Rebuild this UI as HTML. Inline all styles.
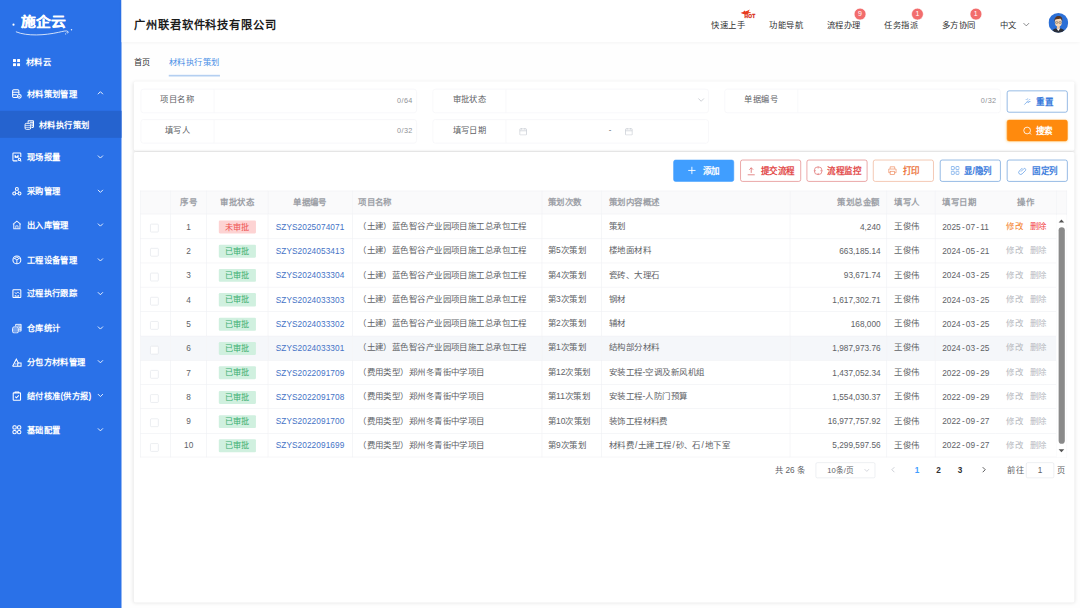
<!DOCTYPE html>
<html lang="zh-CN">
<head>
<meta charset="utf-8">
<title>材料执行策划</title>
<style>
*{box-sizing:border-box;margin:0;padding:0}
html,body{width:1080px;height:608px;overflow:hidden;background:#fefefe}
body{font-family:"Liberation Sans",sans-serif;color:#606266}
#app{position:absolute;left:0;top:0;width:1920px;height:1081px;transform:scale(.5625);transform-origin:0 0;font-size:15px;overflow:hidden;background:#fefefe}
.abs{position:absolute}
/* sidebar */
#side{position:absolute;left:0;top:0;width:215.6px;height:1081px;background:#2a71e8}
#side .it{position:absolute;left:0;width:216px;height:40px;line-height:40px;color:#fff;font-weight:bold;font-size:14.7px;white-space:nowrap}
#side .it span{position:absolute;left:47.5px;top:0}
#side .it svg.ic{position:absolute;left:21px;top:11px;width:18px;height:18px}
#side .it svg.ar{position:absolute;left:172px;top:12.5px;width:13px;height:13px}
#side .act{position:absolute;left:0;top:197.3px;width:215.6px;height:47.5px;background:#2563cf}
/* header */
#hdr{position:absolute;left:215.6px;top:0;width:1704px;height:75px;background:#fff;box-shadow:0 2px 6px rgba(0,0,0,.08)}
#title{position:absolute;left:238px;top:29px;font-size:20px;line-height:30px;font-weight:bold;color:#1a1a1a;letter-spacing:1.2px;white-space:nowrap}
.nav{position:absolute;top:30.5px;font-size:14.8px;line-height:26px;color:#303133;white-space:nowrap}
.bdg{position:absolute;top:14px;width:21.5px;height:21.5px;border-radius:11px;background:#f26d6d;color:#fff;font-size:12.5px;line-height:19.5px;text-align:center;border:1px solid #fff}
/* tabs */
.tab{position:absolute;top:98px;font-size:14.4px;line-height:26px;white-space:nowrap}
/* cards */
.card{position:absolute;left:238px;width:1671.5px;background:#fff;border-radius:3px;box-shadow:0 1px 7px rgba(0,0,0,.10)}
.fld{position:absolute;height:42.5px;border:1px solid #f2f3f6;border-radius:5px;background:#fff;width:491px}
.fld .lb{position:absolute;left:0;top:0;width:130px;height:40.5px;line-height:36.5px;text-align:center;border-right:1px solid #f2f3f6;color:#606266;font-size:14.7px}
.fld .cnt{position:absolute;right:6px;top:0;line-height:39.6px;font-size:12.9px;color:#8f9297;letter-spacing:.7px}
.btn{position:absolute;width:108px;height:39px;border-radius:4px;border:1.8px solid;font-size:15.2px;font-weight:bold;line-height:40px;white-space:nowrap;background:#fff}
.btn span{position:absolute;top:0}
.btn svg{position:absolute}
/* table */
table{position:absolute;left:248.9px;top:338.6px;border-collapse:collapse;table-layout:fixed;width:1646.7px;font-size:15px;color:#606266}
th,td{border:1px solid #eeeff3;height:43.28px;padding:0 10px;white-space:nowrap;overflow:hidden;text-align:left;font-weight:normal}
th{height:41.7px;background:#fafafb;color:#9c9fa6;font-weight:bold;padding-bottom:5px}
td.c,th.c{text-align:center;padding:0}
th.c{padding-bottom:5px}
td{padding-bottom:3.5px}
td.c{padding-bottom:3.5px}
td.lat{padding-bottom:0;padding-top:1.2px;font-size:14.7px}
tr:last-child td{height:41.9px;padding-bottom:2.1px}
tr:last-child td.lat{padding-bottom:0;padding-top:2.6px}
td.r,th.r{text-align:right}
tr.hov td{background:#f5f7fa}
.cb{display:inline-block;width:15px;height:15px;border:1px solid #dfe2e8;border-radius:2px;background:#fff;vertical-align:middle;position:relative;left:-1.6px;top:3.8px}
.tag{position:relative;top:2.6px;display:inline-block;width:65.8px;height:23.2px;line-height:23.2px;border-radius:2px;font-size:14.4px;text-align:center;vertical-align:middle}
.tag.r{background:#fdd3d3;color:#ee4f4f}
.tag.g{background:#d0f0df;color:#36ad6e}
.lk{color:#4573c6}
.num{letter-spacing:0}
.dt i{font-style:normal;margin:0 2.2px}
.sl{font-style:normal;margin:0 1.3px}
.lk{letter-spacing:.13px}
.ops span{margin:0 5.85px}
td.ops{padding-left:2.6px}
.op-e{color:#f5822b}.op-d{color:#f24444}.op-x{color:#b7babf}
td.gut{padding:0;background:#fff;border-left:none}
th.gut{padding:0}
tr>*:nth-child(7){padding-left:12.5px}
tr>*:nth-child(9){padding-left:13px}
tr>*:nth-child(10){padding-left:12px;border-right:none}
tr>*:nth-child(11){border-left:none}
th.r{padding-right:12px}
.pg{position:absolute;top:821px;font-size:14.6px;line-height:28px;color:#606266;white-space:nowrap}
</style>
</head>
<body>
<div id="app">

<!-- ============ SIDEBAR ============ -->
<div id="side">
  <!-- logo -->
  <svg class="abs" style="left:18px;top:18px;width:120px;height:48px" viewBox="0 0 120 48">
    <path d="M10.900 38.700 C30 46.800 62 44.800 86 39.500 C94 37.800 100.500 35.500 103 38.200 C104.200 40 102.500 41.300 101 40.300" fill="none" stroke="#fff" stroke-width="1.500" stroke-linecap="round" opacity=".92"/>
    <circle cx="6" cy="25.800" r="1.900" fill="#fff"/>
    <circle cx="109.100" cy="34.900" r="1.300" fill="#fff" opacity=".9"/>
    <circle cx="98.700" cy="42.300" r="1" fill="#fff" opacity=".8"/>
  </svg>
  <div class="abs" style="left:36.500px;top:22.800px;font-size:22.500px;line-height:32px;font-weight:bold;color:#fff;letter-spacing:0;-webkit-text-stroke:.5px #fff;white-space:nowrap;transform:scaleX(1.167);transform-origin:0 0">施企云</div>

  <div class="it" style="top:91px"><svg class="ic" style="left:23px;top:14px;width:13px;height:13px" viewBox="0 0 13 13"><rect x="0" y="0" width="5.4" height="5.4" rx="1" fill="#fff"/><rect x="7.4" y="0" width="5.4" height="5.4" rx="1" fill="#fff"/><rect x="0" y="7.4" width="5.4" height="5.4" rx="1" fill="#fff"/><rect x="7.4" y="7.4" width="5.4" height="5.4" rx="1" fill="#fff"/></svg><span style="left:46px">材料云</span></div>

  <div class="it" style="top:146.7px"><svg class="ic" style="top:11.500px" viewBox="0 0 18 18" fill="none" stroke="#fff" stroke-width="1.800" stroke-linecap="round" stroke-linejoin="round"><path d="M9 15.500H3.500a2 2 0 0 1-2-2v-10a2 2 0 0 1 2-2h7a2 2 0 0 1 2 2v5"/><path d="M1.500 6h11M1.500 10.500h7"/><circle cx="13.300" cy="13.300" r="3.400" stroke-width="1.900"/><path d="M11.900 13.300l1 1 1.700-1.800" stroke-width="1.500"/></svg><span>材料策划管理</span><svg class="ar" viewBox="0 0 13 13" fill="none" stroke="#fff" stroke-width="1.700" opacity=".95"><path d="M2 8.500l4.500-4.500 4.500 4.500"/></svg></div>

  <div class="act"></div>
  <div class="it" style="top:202.3px"><svg class="ic" style="left:42.500px" viewBox="0 0 18 18" fill="none" stroke="#fff" stroke-width="1.800" stroke-linejoin="round"><path d="M7 5V2.500a1 1 0 0 1 1-1h7.500a1 1 0 0 1 1 1v10a1 1 0 0 1-1 1H13"/><path d="M10 4.500h6M12.500 7.500h4M13 10.500h3.500" stroke-width="1.850"/><rect x="1.400" y="6.300" width="10.200" height="10.600" rx="2.400" stroke-width="1.700"/><path d="M1.500 9.900h10M1.500 13.400h10" stroke-width="1.250"/></svg><span style="left:69.300px">材料执行策划</span></div>

  <div class="it" style="top:259.100px"><svg class="ic" viewBox="0 0 18 18" fill="none" stroke="#fff" stroke-width="1.850"><path d="M16 9V3a1 1 0 0 0-1-1H3a1 1 0 0 0-1 1v12a1 1 0 0 0 1 1h7"/><path d="M5.500 6l3 2.500 3-2.500v4h-6z" fill="#fff" stroke-width="1.200"/><circle cx="13.500" cy="13.500" r="2"/><path d="M15 15l1.800 1.800"/></svg><span>现场报量</span><svg class="ar" viewBox="0 0 13 13" fill="none" stroke="#fff" stroke-width="1.700" opacity=".92"><path d="M2 4.500l4.500 4.500 4.500-4.500"/></svg></div>

  <div class="it" style="top:320.400px"><svg class="ic" viewBox="0 0 18 18" fill="none" stroke="#fff" stroke-width="1.850"><circle cx="9" cy="4.800" r="2.600"/><circle cx="4.300" cy="13" r="2.600"/><circle cx="13.700" cy="13" r="2.600"/><path d="M7.500 7.500L5.500 10.500M10.500 7.500l2 3M7 13h4" stroke-width="1.300"/></svg><span>采购管理</span><svg class="ar" viewBox="0 0 13 13" fill="none" stroke="#fff" stroke-width="1.700" opacity=".92"><path d="M2 4.500l4.500 4.500 4.500-4.500"/></svg></div>

  <div class="it" style="top:380.400px"><svg class="ic" viewBox="0 0 18 18" fill="none" stroke="#fff" stroke-width="1.850" opacity=".9"><path d="M2 8l7-6 7 6"/><path d="M3.500 7v8.500h11V7"/><path d="M7 15.500v-5h4v5" stroke-width="1.500"/></svg><span>出入库管理</span><svg class="ar" viewBox="0 0 13 13" fill="none" stroke="#fff" stroke-width="1.700" opacity=".92"><path d="M2 4.500l4.500 4.500 4.500-4.500"/></svg></div>

  <div class="it" style="top:442.200px"><svg class="ic" viewBox="0 0 18 18" fill="none" stroke="#fff" stroke-width="1.900"><circle cx="9" cy="9" r="7"/><path d="M9 9V16M9 9L3.500 5.500M9 9l5.500-3.500" stroke-width="1.600"/><path d="M5 6.500L9 4l4 2.500" stroke-width="1.500"/></svg><span>工程设备管理</span><svg class="ar" viewBox="0 0 13 13" fill="none" stroke="#fff" stroke-width="1.700" opacity=".92"><path d="M2 4.500l4.500 4.500 4.500-4.500"/></svg></div>

  <div class="it" style="top:502.200px"><svg class="ic" viewBox="0 0 18 18" fill="none" stroke="#fff" stroke-width="1.850"><rect x="2" y="2" width="14" height="14" rx="1"/><path d="M5 7l3 2 2.500-3 3 3" stroke-width="1.500"/><path d="M5 12.500h3M10 12.500h3" stroke-width="1.500"/><path d="M5 14.500h8" stroke-width="1.300"/></svg><span>过程执行跟踪</span><svg class="ar" viewBox="0 0 13 13" fill="none" stroke="#fff" stroke-width="1.700" opacity=".92"><path d="M2 4.500l4.500 4.500 4.500-4.500"/></svg></div>

  <div class="it" style="top:563.600px"><svg class="ic" viewBox="0 0 18 18" fill="none" stroke="#fff" stroke-width="1.800" stroke-linejoin="round"><path d="M7 5V2.500a1 1 0 0 1 1-1h7.500a1 1 0 0 1 1 1v10a1 1 0 0 1-1 1H13"/><path d="M10 4.500h6M12.500 7.500h4M13 10.500h3.500" stroke-width="1.850"/><rect x="1.400" y="6.300" width="10.200" height="10.600" rx="2.400" stroke-width="1.700"/><path d="M1.500 9.900h10M1.500 13.400h10" stroke-width="1.250"/></svg><span>仓库统计</span><svg class="ar" viewBox="0 0 13 13" fill="none" stroke="#fff" stroke-width="1.700" opacity=".92"><path d="M2 4.500l4.500 4.500 4.500-4.500"/></svg></div>

  <div class="it" style="top:623.600px"><svg class="ic" viewBox="0 0 18 18" fill="none" stroke="#fff" stroke-width="1.850"><path d="M1.500 16L8 3.500 12 11"/><path d="M1.500 16h15v-5.500h-6V16" /><path d="M5.500 12h3" stroke-width="1.500"/></svg><span>分包方材料管理</span><svg class="ar" viewBox="0 0 13 13" fill="none" stroke="#fff" stroke-width="1.700" opacity=".92"><path d="M2 4.500l4.500 4.500 4.500-4.500"/></svg></div>

  <div class="it" style="top:683.600px"><svg class="ic" viewBox="0 0 18 18" fill="none" stroke="#fff" stroke-width="1.900"><rect x="2.500" y="3.500" width="13" height="13" rx="1"/><path d="M6 3.500V2h6v1.500" /><path d="M6 10l2.300 2.300L12.500 8"/></svg><span>结付核准(供方报)</span><svg class="ar" viewBox="0 0 13 13" fill="none" stroke="#fff" stroke-width="1.700" opacity=".92"><path d="M2 4.500l4.500 4.500 4.500-4.500"/></svg></div>

  <div class="it" style="top:744px"><svg class="ic" viewBox="0 0 18 18" fill="none" stroke="#fff" stroke-width="1.850"><rect x="2" y="2" width="5.800" height="5.800" rx="2"/><rect x="10.200" y="2" width="5.800" height="5.800" rx="2"/><rect x="2" y="10.200" width="5.800" height="5.800" rx="2"/><rect x="10.200" y="10.200" width="5.800" height="5.800" rx="2"/></svg><span>基础配置</span><svg class="ar" viewBox="0 0 13 13" fill="none" stroke="#fff" stroke-width="1.700" opacity=".92"><path d="M2 4.500l4.500 4.500 4.500-4.500"/></svg></div>
</div>

<!-- ============ HEADER ============ -->
<div id="hdr"></div>
<div id="title">广州联君软件科技有限公司</div>

<div class="nav" style="left:1264.400px">快速上手</div>
<svg class="abs" style="left:1316px;top:16px;width:30px;height:17px" viewBox="0 0 30 17"><path d="M.5 6.500c3-.5 5.500-2 8-4.500-.2 1.200-.3 2 .2 2.600 2.500-.6 5.500-2 8.300-3.800-1.200 1.800-2 3.300-2.200 4.800 1.800-.2 3.300-.3 4.700 0-2.500.8-5 2-7 3.800-3.500.6-8-.4-12-2.900z" fill="#e93b1d"/><text x="7.500" y="15.600" font-family="Liberation Sans, sans-serif" font-size="8.600" font-weight="bold" fill="#d9301a" stroke="#d9301a" stroke-width=".55" letter-spacing=".4">HOT</text></svg>
<div class="nav" style="left:1367.600px">功能导航</div>
<div class="nav" style="left:1469.800px">流程办理</div>
<div class="bdg" style="left:1518.2px">9</div>
<div class="nav" style="left:1572.400px">任务指派</div>
<div class="bdg" style="left:1620.2px">1</div>
<div class="nav" style="left:1674px">多方协同</div>
<div class="bdg" style="left:1724.0px">1</div>
<div class="nav" style="left:1777.800px">中文</div>
<svg class="abs" style="left:1818px;top:37px;width:13px;height:13px" viewBox="0 0 13 13" fill="none" stroke="#606266" stroke-width="1.300"><path d="M1.500 4l5 5 5-5"/></svg>
<!-- avatar -->
<svg class="abs" style="left:1864.4px;top:22.5px;width:35px;height:35px" viewBox="0 0 35 35">
  <defs><clipPath id="av"><circle cx="17.500" cy="17.500" r="17.500"/></clipPath></defs>
  <g clip-path="url(#av)">
    <rect width="35" height="35" fill="#2b6fd6"/>
    <path d="M5 36c0-6 5-9 12.500-9S30 30 30 36z" fill="#2a2f3a"/>
    <path d="M14 27l3.500 5 3.500-5z" fill="#fff"/>
    <rect x="15" y="22" width="5" height="6" fill="#f1c9a5"/>
    <ellipse cx="17.500" cy="16.500" rx="6.200" ry="7.500" fill="#f7d7b5"/>
    <path d="M10.500 15c-.5-6 3-9.500 7.500-9.500s7.500 3 6.500 9.500c-1-3-2-4.500-3.500-5-2 1-6 1.500-8.500 1-1 1-1.500 2.500-2 4z" fill="#5a3621"/>
    <rect x="12.300" y="15.500" width="4.200" height="3" rx="1" fill="none" stroke="#333" stroke-width=".7"/>
    <rect x="18.500" y="15.500" width="4.200" height="3" rx="1" fill="none" stroke="#333" stroke-width=".7"/>
  </g>
</svg>

<!-- ============ TABS ============ -->
<div class="tab" style="left:238.200px;color:#303133">首页</div>
<div class="tab" style="left:300.400px;color:#4a8fe6;font-size:14.700px">材料执行策划</div>
<div class="abs" style="left:300.400px;top:133px;width:91px;height:3px;background:#b4cff1"></div>

<!-- ============ SEARCH CARD ============ -->
<div class="card" style="top:144.500px;height:123px"></div>

<div class="fld" style="left:249.800px;top:158px"><div class="lb">项目名称</div><div class="cnt">0/64</div></div>
<div class="fld" style="left:769px;top:158px"><div class="lb">审批状态</div><svg class="abs" style="right:6.500px;top:12.300px;width:13px;height:13px" viewBox="0 0 13 13" fill="none" stroke="#b6bac2" stroke-width="1.200"><path d="M1.500 4l5 5 5-5"/></svg></div>
<div class="fld" style="left:1287.600px;top:158px"><div class="lb">单据编号</div><div class="cnt">0/32</div></div>
<div class="fld" style="left:249.800px;top:212.400px"><div class="lb">填写人</div><div class="cnt">0/32</div></div>
<div class="fld" style="left:769px;top:212.400px"><div class="lb">填写日期</div>
  <svg class="abs" style="left:153px;top:13.500px;width:14px;height:14px" viewBox="0 0 14 14" fill="none" stroke="#c0c4cc" stroke-width="1.100"><rect x="1" y="2" width="12" height="11" rx="1"/><path d="M1 5.500h12M4 .8v2.500M10 .8v2.500"/></svg>
  <div class="abs" style="left:312px;top:0;line-height:34.500px;color:#55585e;font-size:14px">-</div>
  <svg class="abs" style="left:341px;top:13.500px;width:14px;height:14px" viewBox="0 0 14 14" fill="none" stroke="#c0c4cc" stroke-width="1.100"><rect x="1" y="2" width="12" height="11" rx="1"/><path d="M1 5.500h12M4 .8v2.500M10 .8v2.500"/></svg>
</div>

<div class="btn" style="left:1790.200px;top:161px;border-color:#4585d0;color:#3c7cdc"><svg style="left:28px;top:10px;width:16px;height:16px" viewBox="0 0 16 16" fill="none" stroke="#5b9ae6" stroke-width="1.200"><path d="M2 14l5-5M8 3v2M12.500 4l-1.500 1.500M13 8.500h-2M4.500 4L6 5.500M9 7l2 2-2.500 1.500L7 9z"/></svg><span style="left:51px">重置</span></div>
<div class="btn" style="left:1790.200px;top:213.3px;height:37.8px;line-height:38.500px;border-color:#ff8a0d;background:#ff8a0d;color:#fff;box-shadow:0 1px 4px rgba(255,170,13,.35)"><svg style="left:27px;top:9.500px;width:17px;height:17px" viewBox="0 0 17 17" fill="none" stroke="#fff" stroke-width="1.500"><circle cx="8" cy="8" r="6"/><path d="M12.500 12.500l2.500 2.500"/></svg><span style="left:50px">搜索</span></div>

<!-- ============ TABLE CARD ============ -->
<div class="card" style="top:270.200px;height:800.700px"></div>

<div class="btn" style="left:1197.300px;top:284px;border-color:#409eff;background:#409eff;color:#fff"><svg style="left:24px;top:9.500px;width:16px;height:16px" viewBox="0 0 16 16" fill="none" stroke="#fff" stroke-width="1.600"><path d="M8 1.500v13M1.500 8h13"/></svg><span style="left:51px">添加</span></div>
<div class="btn" style="left:1315.600px;top:284px;border-color:#dc6666;color:#e24a4a"><svg style="left:10px;top:10.500px;width:17px;height:17px" viewBox="0 0 15 15" fill="none" stroke="#dc6666" stroke-width="1.200"><path d="M7.500 10V2M4.500 5l3-3 3 3M2 13h11"/></svg><span style="left:36px">提交流程</span></div>
<div class="btn" style="left:1433.800px;top:284px;border-color:#dc6666;color:#e24a4a"><svg style="left:11px;top:9.500px;width:17px;height:17px" viewBox="0 0 17 17" fill="none" stroke="#dc6666" stroke-width="1.200"><circle cx="8.500" cy="8.500" r="7"/><path d="M8.500 1.500v3M8.500 12.500v3M1.500 8.500h3M12.500 8.500h3"/></svg><span style="left:36px">流程监控</span></div>
<div class="btn" style="left:1552px;top:284px;border-color:#eba07c;color:#ec7540"><svg style="left:25px;top:9.500px;width:17px;height:17px" viewBox="0 0 17 17" fill="none" stroke="#ee8a5c" stroke-width="1.200"><path d="M4.500 5V1.500h8V5M4.500 12H2V5.500h13V12h-2.500"/><rect x="4.500" y="9.500" width="8" height="6"/></svg><span style="left:52px">打印</span></div>
<div class="btn" style="left:1671.100px;top:284px;border-color:#4585d0;color:#3c7cdc"><svg style="left:18px;top:10px;width:16px;height:16px" viewBox="0 0 16 16" fill="none" stroke="#5b9ae6" stroke-width="1.200"><rect x="1" y="1" width="5.500" height="5.500" rx="1"/><rect x="9.500" y="1" width="5.500" height="5.500" rx="1"/><rect x="1" y="9.500" width="5.500" height="5.500" rx="1"/><rect x="9.500" y="9.500" width="5.500" height="5.500" rx="1"/></svg><span style="left:42px">显/隐列</span></div>
<div class="btn" style="left:1790.200px;top:284px;border-color:#4585d0;color:#3c7cdc"><svg style="left:18px;top:10px;width:16px;height:16px" viewBox="0 0 16 16" fill="none" stroke="#5b9ae6" stroke-width="1.300"><path d="M6 10l5-5a2.200 2.200 0 0 1 3.100 3.100l-6 6a3.500 3.500 0 0 1-5-5l5.500-5.500"/></svg><span style="left:44px">固定列</span></div>

<table>
<colgroup><col style="width:54.200px"><col style="width:63.600px"><col style="width:108.900px"><col style="width:150.200px"><col style="width:336.900px"><col style="width:106.300px"><col style="width:334.600px"><col style="width:172px"><col style="width:86.600px"><col style="width:106.700px"><col style="width:108.900px"><col style="width:17.800px"></colgroup>
<thead><tr><th class="c"></th><th class="c">序号</th><th class="c">审批状态</th><th class="c">单据编号</th><th>项目名称</th><th>策划次数</th><th>策划内容概述</th><th class="r">策划总金额</th><th>填写人</th><th>填写日期</th><th class="c">操作</th><th class="gut"></th></tr></thead>
<tbody>
<tr><td class="c"><i class="cb"></i></td><td class="c lat">1</td><td class="c"><span class="tag r">未审批</span></td><td class="c lat"><a class="lk">SZYS2025074071</a></td><td class="pj">（土建）蓝色智谷产业园项目施工总承包工程</td><td></td><td>策划</td><td class="r num lat">4,240</td><td>王俊伟</td><td class="dt lat">2025<i>-</i>07<i>-</i>11</td><td class="c ops"><span class="op-e">修改</span><span class="op-d">删除</span></td><td class="gut"></td></tr>
<tr><td class="c"><i class="cb"></i></td><td class="c lat">2</td><td class="c"><span class="tag g">已审批</span></td><td class="c lat"><a class="lk">SZYS2024053413</a></td><td class="pj">（土建）蓝色智谷产业园项目施工总承包工程</td><td>第5次策划</td><td>楼地面材料</td><td class="r num lat">663,185.14</td><td>王俊伟</td><td class="dt lat">2024<i>-</i>05<i>-</i>21</td><td class="c ops"><span class="op-x">修改</span><span class="op-x">删除</span></td><td class="gut"></td></tr>
<tr><td class="c"><i class="cb"></i></td><td class="c lat">3</td><td class="c"><span class="tag g">已审批</span></td><td class="c lat"><a class="lk">SZYS2024033304</a></td><td class="pj">（土建）蓝色智谷产业园项目施工总承包工程</td><td>第4次策划</td><td>瓷砖、大理石</td><td class="r num lat">93,671.74</td><td>王俊伟</td><td class="dt lat">2024<i>-</i>03<i>-</i>25</td><td class="c ops"><span class="op-x">修改</span><span class="op-x">删除</span></td><td class="gut"></td></tr>
<tr><td class="c"><i class="cb"></i></td><td class="c lat">4</td><td class="c"><span class="tag g">已审批</span></td><td class="c lat"><a class="lk">SZYS2024033303</a></td><td class="pj">（土建）蓝色智谷产业园项目施工总承包工程</td><td>第3次策划</td><td>钢材</td><td class="r num lat">1,617,302.71</td><td>王俊伟</td><td class="dt lat">2024<i>-</i>03<i>-</i>25</td><td class="c ops"><span class="op-x">修改</span><span class="op-x">删除</span></td><td class="gut"></td></tr>
<tr><td class="c"><i class="cb"></i></td><td class="c lat">5</td><td class="c"><span class="tag g">已审批</span></td><td class="c lat"><a class="lk">SZYS2024033302</a></td><td class="pj">（土建）蓝色智谷产业园项目施工总承包工程</td><td>第2次策划</td><td>辅材</td><td class="r num lat">168,000</td><td>王俊伟</td><td class="dt lat">2024<i>-</i>03<i>-</i>25</td><td class="c ops"><span class="op-x">修改</span><span class="op-x">删除</span></td><td class="gut"></td></tr>
<tr class="hov"><td class="c"><i class="cb"></i></td><td class="c lat">6</td><td class="c"><span class="tag g">已审批</span></td><td class="c lat"><a class="lk">SZYS2024033301</a></td><td class="pj">（土建）蓝色智谷产业园项目施工总承包工程</td><td>第1次策划</td><td>结构部分材料</td><td class="r num lat">1,987,973.76</td><td>王俊伟</td><td class="dt lat">2024<i>-</i>03<i>-</i>25</td><td class="c ops"><span class="op-x">修改</span><span class="op-x">删除</span></td><td class="gut"></td></tr>
<tr><td class="c"><i class="cb"></i></td><td class="c lat">7</td><td class="c"><span class="tag g">已审批</span></td><td class="c lat"><a class="lk">SZYS2022091709</a></td><td class="pj">（费用类型）郑州冬青街中学项目</td><td>第12次策划</td><td>安装工程-空调及新风机组</td><td class="r num lat">1,437,052.34</td><td>王俊伟</td><td class="dt lat">2022<i>-</i>09<i>-</i>29</td><td class="c ops"><span class="op-x">修改</span><span class="op-x">删除</span></td><td class="gut"></td></tr>
<tr><td class="c"><i class="cb"></i></td><td class="c lat">8</td><td class="c"><span class="tag g">已审批</span></td><td class="c lat"><a class="lk">SZYS2022091708</a></td><td class="pj">（费用类型）郑州冬青街中学项目</td><td>第11次策划</td><td>安装工程-人防门预算</td><td class="r num lat">1,554,030.37</td><td>王俊伟</td><td class="dt lat">2022<i>-</i>09<i>-</i>29</td><td class="c ops"><span class="op-x">修改</span><span class="op-x">删除</span></td><td class="gut"></td></tr>
<tr><td class="c"><i class="cb"></i></td><td class="c lat">9</td><td class="c"><span class="tag g">已审批</span></td><td class="c lat"><a class="lk">SZYS2022091700</a></td><td class="pj">（费用类型）郑州冬青街中学项目</td><td>第10次策划</td><td>装饰工程材料费</td><td class="r num lat">16,977,757.92</td><td>王俊伟</td><td class="dt lat">2022<i>-</i>09<i>-</i>27</td><td class="c ops"><span class="op-x">修改</span><span class="op-x">删除</span></td><td class="gut"></td></tr>
<tr><td class="c"><i class="cb"></i></td><td class="c lat">10</td><td class="c"><span class="tag g">已审批</span></td><td class="c lat"><a class="lk">SZYS2022091699</a></td><td class="pj">（费用类型）郑州冬青街中学项目</td><td>第9次策划</td><td>材料费<i class="sl">/</i>土建工程<i class="sl">/</i>砂、石<i class="sl">/</i>地下室</td><td class="r num lat">5,299,597.56</td><td>王俊伟</td><td class="dt lat">2022<i>-</i>09<i>-</i>27</td><td class="c ops"><span class="op-x">修改</span><span class="op-x">删除</span></td><td class="gut"></td></tr>
</tbody>
</table>
<!-- scrollbar -->
<div class="abs" style="left:1878.300px;top:382px;width:17.300px;height:430.500px;background:#fff"></div>
<svg class="abs" style="left:1880.300px;top:388px;width:14px;height:9px" viewBox="0 0 14 9"><path d="M2 7.500l5-5.500 5 5.500z" fill="#555"/></svg>
<div class="abs" style="left:1882.300px;top:404.400px;width:11.200px;height:385px;border-radius:5.600px;background:#8a8a8a"></div>
<svg class="abs" style="left:1880.300px;top:797px;width:14px;height:9px" viewBox="0 0 14 9"><path d="M2 1.500l5 5.500 5-5.500z" fill="#555"/></svg>

<!-- pagination -->
<div class="pg" style="left:1377.400px">共 26 条</div>
<div class="abs" style="left:1449.600px;top:821.700px;width:106.800px;height:28.200px;border:1px solid #dfe2e8;border-radius:3px;background:#fff"></div>
<div class="pg" style="left:1470.8px;top:822.3px;font-size:13.6px">10条/页</div>
<svg class="abs" style="left:1536px;top:830.500px;width:10px;height:10px" viewBox="0 0 10 10" fill="none" stroke="#c0c4cc" stroke-width="1.200"><path d="M1 3l4 4 4-4"/></svg>
<svg class="abs" style="left:1582px;top:829px;width:12px;height:12px" viewBox="0 0 12 12" fill="none" stroke="#c0c4cc" stroke-width="1.400"><path d="M8 1.500L3.500 6 8 10.500"/></svg>
<div class="pg" style="left:1626px;color:#409eff;font-weight:bold">1</div>
<div class="pg" style="left:1664.400px;color:#303133;font-weight:bold">2</div>
<div class="pg" style="left:1702.700px;color:#303133;font-weight:bold">3</div>
<svg class="abs" style="left:1743px;top:829px;width:12px;height:12px" viewBox="0 0 12 12" fill="none" stroke="#303133" stroke-width="1.400"><path d="M4 1.500L8.500 6 4 10.500"/></svg>
<div class="pg" style="left:1791px">前往</div>
<div class="abs" style="left:1824px;top:821.700px;width:50px;height:28.200px;border:1px solid #dfe2e8;border-radius:3px;background:#fff;text-align:center;line-height:25px;font-size:14.6px;color:#606266">1</div>
<div class="pg" style="left:1879px">页</div>

</div>
</body>
</html>
